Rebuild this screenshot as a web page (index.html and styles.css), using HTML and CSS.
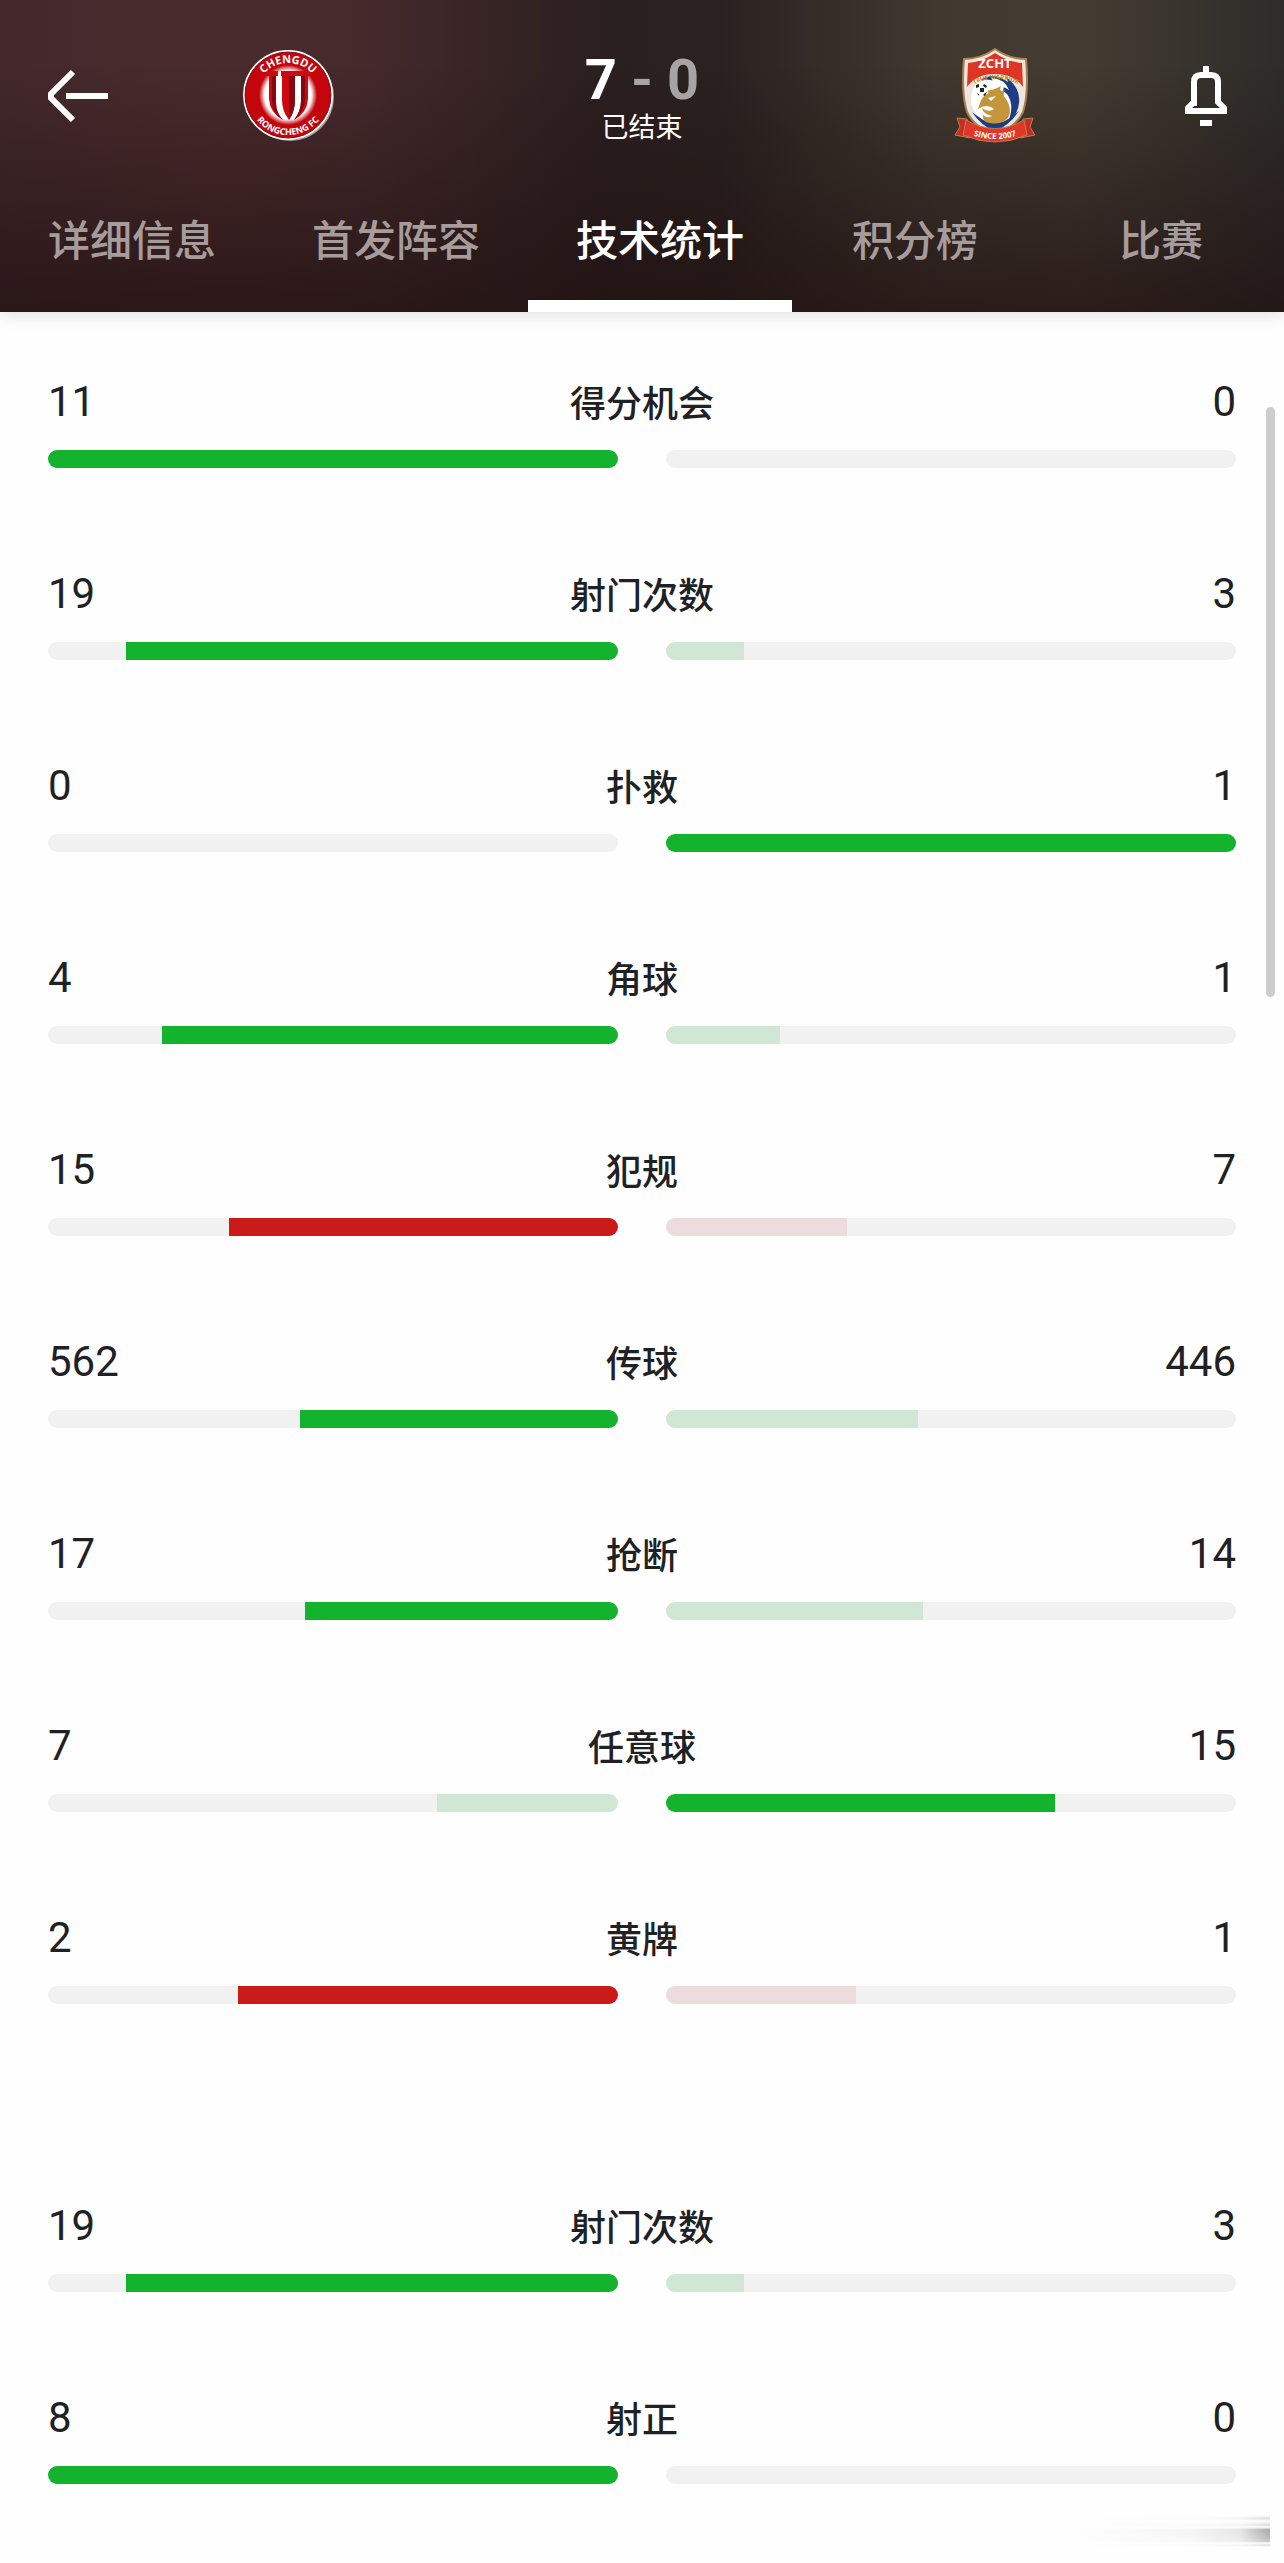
FILE: index.html
```html
<!DOCTYPE html>
<html lang="zh-CN">
<head>
<meta charset="utf-8">
<meta name="viewport" content="width=device-width, initial-scale=1">
<title>技术统计</title>
<link rel="stylesheet" href="styles.css">
</head>
<body>
<header class="header">
  <div class="match">
    <button class="icon-button" type="button" aria-label="返回">
      <svg width="60" height="60" viewBox="0 0 60 60" fill="none" stroke="#fff" stroke-width="6"><path d="M25 6 3 28V32L25 54M18 30H60"/></svg>
    </button>
    <svg class="crest" viewBox="0 0 96 102" role="img" aria-label="Chengdu Rongcheng FC">
      <defs>
        <radialGradient id="glow"><stop offset=".8" stop-color="#fff"/><stop offset="1" stop-color="#c4060c"/></radialGradient>
        <path id="arc-top" d="M14 51A33 33 0 0 1 80 51"/>
        <path id="arc-bottom" d="M7 50A40 40 0 0 0 87 50"/>
      </defs>
      <circle cx="49" cy="52" r="44" fill="#a99"/>
      <circle cx="47" cy="50" r="44" fill="#c4060c" stroke="#fff" stroke-width="2"/>
      <circle cx="47" cy="50" r="43" fill="none" stroke="#860d12" stroke-width="1"/>
      <ellipse cx="47" cy="50" rx="29" ry="30" fill="url(#glow)"/>
      <path d="M25 26H37V31H35V58Q35 68 42 75Q29 68 28 54V31H25Z" fill="#ce0910"/>
      <path d="M31 31H35V58Q35 68 42 75Q31 69 31 54Z" fill="#850910"/>
      <path d="M40 26H70V31H67V54Q66 68 53 75Q60 66 60 56V31H54V55Q54 66 48 75Q41 66 41 55V31H40Z" fill="#ce0910"/>
      <path d="M48 31H54V55Q54 66 48 75ZM60 31H64V54Q63 68 53 75Q60 66 60 56Z" fill="#850910"/>
      <text class="crest-name" text-anchor="middle"><textPath href="#arc-top" startOffset="50%">CHENGDU</textPath></text>
      <text class="crest-town" text-anchor="middle"><textPath href="#arc-bottom" startOffset="50%">RONGCHENG FC</textPath></text>
    </svg>
    <div class="result">
      <div class="score"><span>7</span><span class="dim">-</span><span class="dim">0</span></div>
      <div class="status">已结束</div>
    </div>
    <svg class="crest" viewBox="0 0 96 102" role="img" aria-label="ZCHT">
      <path d="M48 4Q62 14 79 14Q82 48 76 67Q69 82 48 90Q27 82 20 67Q14 48 17 14Q34 14 48 4Z" fill="#eee5df" stroke="#a8804c" stroke-width="2"/>
      <path d="M48 8Q61 17 75 18L76 42Q67 29 48 29Q29 29 20 42L21 18Q35 17 48 8Z" fill="#df3524"/>
      <path d="M25 67Q34 81 48 86Q62 81 72 66Q61 76 48 76Q35 76 25 67Z" fill="#1d3d82"/>
      <circle cx="48" cy="54" r="24" fill="#fff"/>
      <path d="M33 35Q47 26 61 37L59 32Q74 43 72 58Q71 70 61 77Q68 60 60 49L56 46L57 41Q46 33 33 35Z" fill="#1d3d82"/>
      <path d="M45 33Q58 34 62 45Q54 40 46 41Z" fill="#fff"/>
      <path d="M33 58Q35 51 42 48L38 46Q48 45 54 41Q51 48 58 45Q55 50 59 54Q67 67 59 75Q52 80 43 78Q35 77 36 70Q41 74 45 71Q36 69 35 63Q42 68 47 64Q40 58 31 64Z" fill="#c3963b"/>
      <path d="M41 53 49 51 44 56Z" fill="#fff"/>
      <circle cx="35" cy="45" r="6" fill="#fff"/>
      <path d="M33 43h4v4h-4zM29 40l3-1v3l-3 1zM37 39l3 2-1 2-3-2zM38 48l2-1-2 4-2-1zM30 48l2 1v2z" fill="#222"/>
      <path d="M20 74 10 73 13 82 8 90 23 93ZM76 74 86 73 83 82 88 90 73 93Z" fill="#c92c22" stroke="#b68150" stroke-width="1"/>
      <path d="M19 75Q48 92 77 75L80 90Q48 104 16 90Z" fill="#e23728" stroke="#b68150" stroke-width="1"/>
      <path id="ribbon-line" d="M17 87Q48 101 79 87" fill="none"/>
      <path id="motto-line" d="M22 42Q48 26 76 42" fill="none"/>
      <text class="crest-code" x="48" y="23" text-anchor="middle">ZCHT</text>
      <text class="crest-motto" text-anchor="middle"><textPath href="#motto-line" startOffset="50%">TRUE WARRIOR</textPath></text>
      <text class="crest-since" text-anchor="middle"><textPath href="#ribbon-line" startOffset="50%">SINCE 2007</textPath></text>
    </svg>
    <button class="icon-button bell" type="button" aria-label="通知">
      <svg width="42" height="60" viewBox="0 0 42 60" fill="none" stroke="#fff" stroke-width="6"><path d="M21 0V8M9 40V16Q9 9 16 9H26Q33 9 33 16V36L39 42V45H3V42L9 36V28M15 57H27"/></svg>
    </button>
  </div>
  <nav class="tabs">
    <a class="tab" href="#details">详细信息</a>
    <a class="tab" href="#lineups">首发阵容</a>
    <a class="tab active" href="#stats" aria-current="page">技术统计</a>
    <a class="tab short" href="#table">积分榜</a>
    <a class="tab short" href="#matches">比赛</a>
  </nav>
</header>
<main class="stats" id="stats">
  <section class="group">
    <div class="stat"><div class="values"><span>11</span><span class="label">得分机会</span><span>0</span></div>
      <div class="bars"><div class="bar home"><div class="fill good" style="width:100%"></div></div><div class="bar"></div></div></div>
    <div class="stat"><div class="values"><span>19</span><span class="label">射门次数</span><span>3</span></div>
      <div class="bars"><div class="bar home"><div class="fill good" style="width:86.36%"></div></div><div class="bar"><div class="fill good-pale" style="width:13.64%"></div></div></div></div>
    <div class="stat"><div class="values"><span>0</span><span class="label">扑救</span><span>1</span></div>
      <div class="bars"><div class="bar home"></div><div class="bar"><div class="fill good" style="width:100%"></div></div></div></div>
    <div class="stat"><div class="values"><span>4</span><span class="label">角球</span><span>1</span></div>
      <div class="bars"><div class="bar home"><div class="fill good" style="width:80%"></div></div><div class="bar"><div class="fill good-pale" style="width:20%"></div></div></div></div>
    <div class="stat"><div class="values"><span>15</span><span class="label">犯规</span><span>7</span></div>
      <div class="bars"><div class="bar home"><div class="fill bad" style="width:68.18%"></div></div><div class="bar"><div class="fill bad-pale" style="width:31.82%"></div></div></div></div>
    <div class="stat"><div class="values"><span>562</span><span class="label">传球</span><span>446</span></div>
      <div class="bars"><div class="bar home"><div class="fill good" style="width:55.75%"></div></div><div class="bar"><div class="fill good-pale" style="width:44.25%"></div></div></div></div>
    <div class="stat"><div class="values"><span>17</span><span class="label">抢断</span><span>14</span></div>
      <div class="bars"><div class="bar home"><div class="fill good" style="width:54.84%"></div></div><div class="bar"><div class="fill good-pale" style="width:45.16%"></div></div></div></div>
    <div class="stat"><div class="values"><span>7</span><span class="label">任意球</span><span>15</span></div>
      <div class="bars"><div class="bar home"><div class="fill good-pale" style="width:31.82%"></div></div><div class="bar"><div class="fill good" style="width:68.18%"></div></div></div></div>
    <div class="stat"><div class="values"><span>2</span><span class="label">黄牌</span><span>1</span></div>
      <div class="bars"><div class="bar home"><div class="fill bad" style="width:66.67%"></div></div><div class="bar"><div class="fill bad-pale" style="width:33.33%"></div></div></div></div>
  </section>
  <section class="group">
    <div class="stat"><div class="values"><span>19</span><span class="label">射门次数</span><span>3</span></div>
      <div class="bars"><div class="bar home"><div class="fill good" style="width:86.36%"></div></div><div class="bar"><div class="fill good-pale" style="width:13.64%"></div></div></div></div>
    <div class="stat"><div class="values"><span>8</span><span class="label">射正</span><span>0</span></div>
      <div class="bars"><div class="bar home"><div class="fill good" style="width:100%"></div></div><div class="bar"></div></div></div>
  </section>
  <div class="scroll-thumb"></div>
  <div class="smudge"></div>
</main>
</body>
</html>
```
FILE: styles.css
```css
* { box-sizing: border-box; }

body {
  margin: 0;
  background: #fefefe;
  color: #202124;
  font-family: Roboto, "Noto Sans CJK SC", sans-serif;
}

.header {
  position: relative;
  color: #fff;
  background:
    linear-gradient(rgba(32, 16, 16, 0) 20%, rgba(32, 16, 16, .72)),
    linear-gradient(90deg, #43292c 0, #4a2b2d 18%, #452a2c 28%, #2b1f1f 47%, #292220 56%, #403930 73%, #443c32 84%, #2d2c29 100%);
  box-shadow: 0 2px 16px rgba(0, 0, 0, .14);
}

.match {
  display: grid;
  grid-template-columns: 108px 1fr 440px 1fr 108px;
  align-items: center;
  height: 192px;
  padding: 0 48px;
}

.icon-button {
  display: flex;
  padding: 0;
  border: 0;
  background: none;
}

.bell { justify-self: end; padding-right: 9px; }

.crest {
  width: 96px;
  height: 102px;
  justify-self: center;
  font-family: "Open Sans", sans-serif;
  font-weight: 700;
  fill: #fff;
}

.crest-name { font-size: 11px; }
.crest-town { font-size: 9px; }
.crest-code { font-size: 13px; }
.crest-motto { font-size: 6px; fill: #c68b32; }
.crest-since { font-size: 8px; }

.result { padding-top: 4px; text-align: center; }

.score {
  display: flex;
  justify-content: center;
  gap: 14px;
  font-size: 56px;
  line-height: 60px;
  font-weight: 700;
}

.dim { color: #aaa3a3; }

.status {
  font-size: 27px;
  line-height: 36px;
}

.tabs {
  display: flex;
  height: 120px;
}

.tab {
  padding: 14px 48px 0;
  border-bottom: 12px solid transparent;
  color: #a69c9c;
  font-size: 42px;
  line-height: 72px;
  font-weight: 500;
  text-align: center;
  text-decoration: none;
  white-space: nowrap;
}

.short { flex: 1; }

.active {
  border-bottom-color: #fff;
  color: #fff;
}

.stats {
  position: relative;
  padding: 60px 48px 79px;
}

.group { display: grid; gap: 96px; }
.group + .group { margin-top: 192px; }

.stat { display: grid; gap: 18px; }

.values {
  display: grid;
  grid-template-columns: 1fr auto 1fr;
  font-size: 42px;
  line-height: 60px;
}

.values > :last-child { text-align: right; }

.label {
  padding-top: 6px;
  font-size: 36px;
  line-height: 54px;
  font-weight: 500;
}

.bars {
  display: grid;
  grid-template-columns: 1fr 1fr;
  gap: 48px;
}

.bar {
  display: flex;
  height: 18px;
  overflow: hidden;
  border-radius: 9px;
  background: #f1f1f1;
}

.home { justify-content: flex-end; }

.good { background: #13b32d; }
.good-pale { background: #d0e8d3; }
.bad { background: #cb1b19; }
.bad-pale { background: #eddcdc; }

.scroll-thumb {
  position: absolute;
  top: 95px;
  right: 9px;
  width: 9px;
  height: 590px;
  border-radius: 5px;
  background: #cdcdcd;
}

.smudge {
  position: absolute;
  right: 14px;
  bottom: 16px;
  width: 200px;
  height: 32px;
  background:
    linear-gradient(90deg, #fefefe, rgba(254, 254, 254, .9) 60%, rgba(254, 254, 254, .7) 85%, rgba(254, 254, 254, 0)),
    linear-gradient(#fefefe, #dcdcdc 12%, #fefefe 18%, #dcdcdc 32%, #fefefe 38%, #a8a8a8 46%, #c4c4c4 82%, #fefefe 88%, #dcdcdc 94%, #fefefe);
}
```
